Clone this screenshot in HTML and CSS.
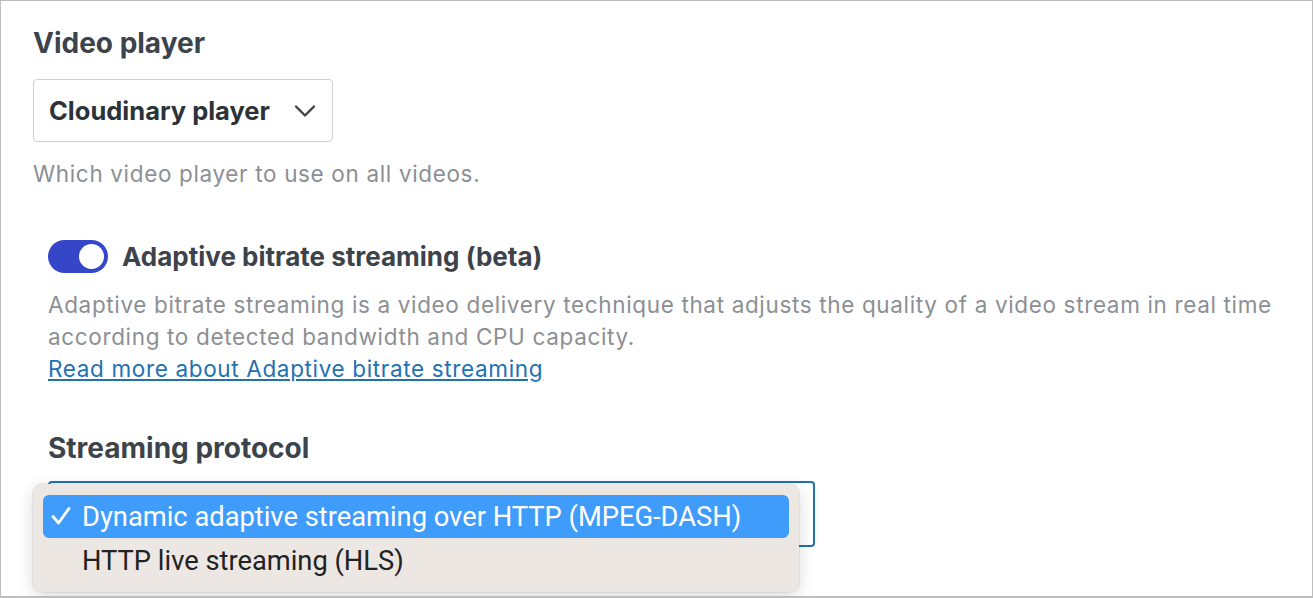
FILE: index.html
```html
<!DOCTYPE html>
<html lang="en">
<head>
    <meta charset="UTF-8">
    <title>Video settings</title>
    <link rel="stylesheet" href="styles.css">
</head>
<body>
    <div class="frame">
        <h2 class="field-title">Video player</h2>
        <div class="select">
            <span>Cloudinary player</span>
            <svg class="chevron" width="22" height="14" viewBox="0 0 22 14"><path d="M2 2.5 L11 11.5 L20 2.5" fill="none" stroke="#3c434a" stroke-width="2.4" stroke-linecap="round" stroke-linejoin="round"/></svg>
        </div>
        <p class="help">Which video player to use on all videos.</p>

        <div class="sub">
            <label class="toggle-row">
                <span class="toggle"><span class="knob"></span></span>
                <span class="toggle-label">Adaptive bitrate streaming (beta)</span>
            </label>
            <p class="help wide">Adaptive bitrate streaming is a video delivery technique that adjusts the quality of a video stream in real time according to detected bandwidth and CPU capacity.<br><a href="#">Read more about Adaptive bitrate streaming</a></p>

            <h2 class="field-title small">Streaming protocol</h2>
            <div class="select open">
                <ul class="menu">
                    <li class="item active">
                        <svg class="check" width="20" height="18" viewBox="0 0 20 18"><path d="M2 9.5 L7.5 16 L18 1.5" fill="none" stroke="#fff" stroke-width="2.8" stroke-linecap="round" stroke-linejoin="round"/></svg>
                        Dynamic adaptive streaming over HTTP (MPEG-DASH)
                    </li>
                    <li class="item">HTTP live streaming (HLS)</li>
                </ul>
            </div>
        </div>
    </div>
</body>
</html>
```
FILE: styles.css
```css
body {
    margin: 0;
    font-family: Inter, "Noto Sans", sans-serif;
    color: #3c434a;
    background: #fff;
}
.frame {
    width: 1313px;
    height: 598px;
    box-sizing: border-box;
    border: 1px solid #bdbdbd;
    border-bottom-width: 2px;
    padding: 26px 0 0 32px;
    overflow: hidden;
}
.field-title {
    margin: 0;
    font-size: 28px;
    line-height: 32px;
    font-weight: 700;
}
.field-title.small {
    margin-top: 47px;
}
.select {
    margin-top: 20px;
    width: 300px;
    height: 63px;
    box-sizing: border-box;
    border: 1px solid #cfcfcf;
    border-radius: 4px;
    display: flex;
    align-items: center;
    justify-content: space-between;
    padding: 0 16px 0 15px;
    font-size: 25.5px;
    font-weight: 700;
    color: #2c3338;
}
.help {
    margin: 18px 0 0;
    font-size: 22.5px;
    letter-spacing: 0.65px;
    line-height: 28px;
    color: #8c8f94;
}
.sub {
    padding-left: 15px;
}
.toggle-row {
    margin-top: 52px;
    display: flex;
    align-items: center;
    gap: 14px;
}
.toggle {
    width: 60px;
    height: 33px;
    border-radius: 17px;
    background: #3546c9;
    display: flex;
    align-items: center;
    justify-content: flex-end;
    padding-right: 4px;
    box-sizing: border-box;
}
.knob {
    width: 25px;
    height: 25px;
    border-radius: 50%;
    background: #fff;
}
.toggle-label {
    font-size: 26px;
    font-weight: 700;
}
.help.wide {
    margin-top: 16px;
    line-height: 32px;
}
.help a {
    color: #2271b1;
}
.select.open {
    position: relative;
    width: 767px;
    height: 66px;
    margin-top: 17px;
    border: 2px solid #2271b1;
    border-radius: 4px;
    padding: 0;
}
.menu {
    position: absolute;
    left: -17px;
    top: 1px;
    width: 766px;
    margin: 0;
    padding: 11px 10px 8px;
    box-sizing: border-box;
    list-style: none;
    background: #ece7e3;
    border-radius: 9px;
    box-shadow: 0 4px 16px rgba(0, 0, 0, 0.15), 0 0 0 1px rgba(0, 0, 0, 0.06);
    font-family: Roboto, "Noto Sans", sans-serif;
    font-weight: 400;
}
.item {
    height: 43px;
    display: flex;
    align-items: center;
    padding-left: 39px;
    position: relative;
    font-size: 27.3px;
    color: #222;
    border-radius: 6px;
}
.item + .item {
    height: 46px;
}
.item.active {
    background: #409cfb;
    color: #fff;
}
.check {
    position: absolute;
    left: 8px;
    top: 12px;
}
```
